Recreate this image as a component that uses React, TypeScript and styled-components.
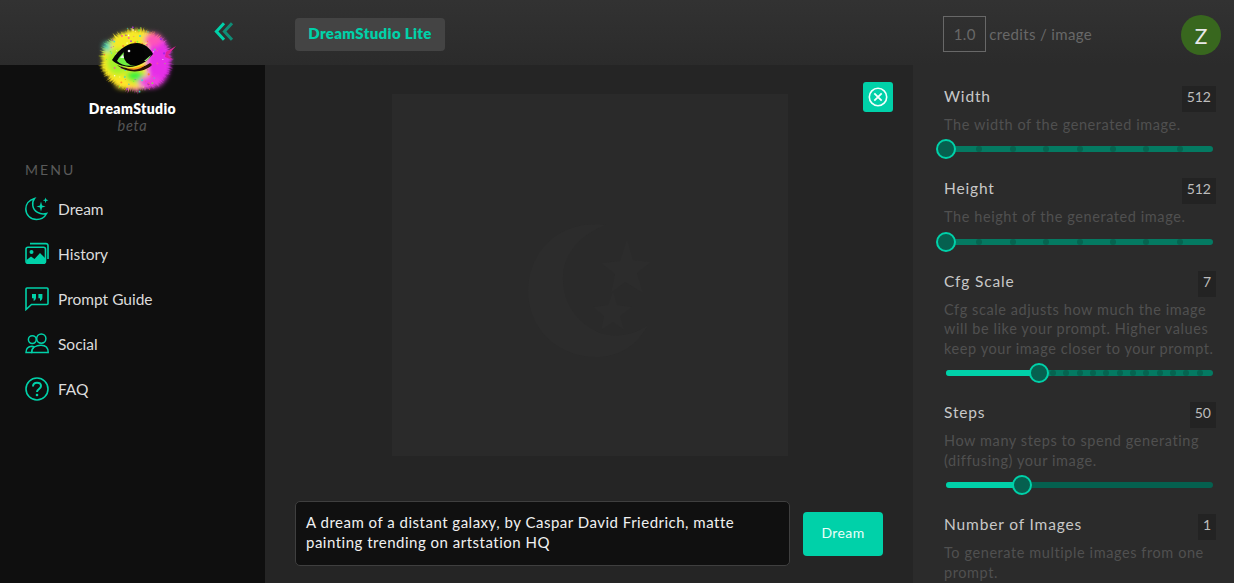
import React from "react";
import styled, { createGlobalStyle } from "styled-components";

const Global = createGlobalStyle`
  html, body { margin: 0; padding: 0; background: #252525; }
  body { font-family: "Lato", "Liberation Sans", sans-serif; overflow: hidden; }
  * { box-sizing: border-box; }
`;

const ACCENT = "#00d1a9";

const Page = styled.div`
  width: 1234px; height: 583px; display: flex; flex-direction: column; overflow: hidden; position: relative;
`;
const TopBar = styled.header`
  height: 65px; flex: none; display: flex; align-items: center;
  background: linear-gradient(#323232, #2b2b2b);
`;
const CollapseSlot = styled.div`
  width: 265px; flex: none; display: flex; justify-content: flex-end; padding-right: 31px; margin-top: -2px;
`;
const LiteBadge = styled.div`
  margin-left: 30px; width: 150px; height: 33px; margin-top: 4px; border-radius: 4px; background: #444;
  color: ${ACCENT}; font-weight: 800; font-size: 15px; letter-spacing: .33px;
  display: flex; align-items: center; justify-content: center; padding-bottom: 3px;
`;
const Credits = styled.div`
  margin-left: auto; display: flex; align-items: center; gap: 3px; color: #686868; font-size: 15px;
  letter-spacing: .35px; margin-top: 3px;
`;
const CreditBox = styled.div`
  width: 43px; height: 36px; border: 1px solid #686868; display: flex; align-items: center; justify-content: center;
`;
const Avatar = styled.div`
  width: 40px; height: 40px; border-radius: 50%; background: #38671e; color: #e8e8e8; font-size: 21px;
  display: flex; align-items: center; justify-content: center; margin: 5px 13px 0 89px;
`;
const Body = styled.div` flex: 1; min-height: 0; display: flex; `;
const Sidebar = styled.aside`
  width: 265px; flex: none; background: #0f0f0f; display: flex; flex-direction: column; padding-top: 35px;
`;
const Brand = styled.div`
  width: 265px; display: flex; flex-direction: column; align-items: center;
`;
const BrandName = styled.div` color: #fff; font-weight: 800; font-size: 14px; line-height: 17px; letter-spacing: .38px; `;
const BrandTag = styled.div` color: #565656; font-style: italic; font-size: 14.5px; line-height: 17px; letter-spacing: .7px; `;
const MenuTitle = styled.div`
  margin: 27px 0 0 25px; color: #5a5a5a; font-size: 14px; letter-spacing: 2.1px; line-height: 18px;
`;
const Nav = styled.nav` margin-top: 7px; display: flex; flex-direction: column; `;
const NavItem = styled.a`
  height: 45px; padding-left: 25px; display: flex; align-items: center; gap: 9px; color: #dcdcdc; font-size: 15.5px;
  letter-spacing: 0;
`;
const LogoSlot = styled.div` position: absolute; left: 90px; top: 20px; width: 90px; height: 78px; `;
const Main = styled.main`
  flex: 1; min-width: 0; background: #252525; display: flex; flex-direction: column; align-items: flex-start; position: relative;
  padding-top: 29px;
`;
const Canvas = styled.div`
  margin-left: 127px; width: 396px; height: 362px; background: #2a2a2a; display: flex; align-items: center; justify-content: center;
`;
const CloseButton = styled.button`
  position: absolute; left: 598px; top: 17px; width: 30px; height: 30px; border: 0; padding: 0; border-radius: 3px;
  background: ${ACCENT}; display: flex; align-items: center; justify-content: center;
`;
const PromptRow = styled.div` margin: 45px 0 0 30px; display: flex; align-items: center; gap: 13px; `;
const Prompt = styled.div`
  width: 495px; height: 65px; border: 1px solid #3f3f3f; border-radius: 5px; background: #101010; color: #f0f0f0;
  font-size: 15px; line-height: 20px; padding: 10px 10px; letter-spacing: .5px;
`;
const DreamButton = styled.button`
  width: 80px; height: 44px; border: 0; border-radius: 4px; background: ${ACCENT}; color: #eafff9; font-family: inherit;
  font-size: 14px; letter-spacing: .4px; padding: 0 0 3px;
`;
const Panel = styled.aside`
  width: 321px; flex: none; background: #2b2b2b; padding: 21px 18px 0 30px; display: flex; flex-direction: column;
`;
const Setting = styled.section` display: flex; flex-direction: column; margin-bottom: 19.2px; `;
const SettingHead = styled.div` display: flex; justify-content: space-between; align-items: flex-start; height: 26px; `;
const SettingLabel = styled.div` color: #c8c8c8; font-size: 15.5px; letter-spacing: .85px; line-height: 21px; padding-left: 1px; `;
const SettingValue = styled.div`
  height: 26px; min-width: 16px; padding: 0 5px 5px; background: #232323; color: #bdbdbd; font-size: 14px;
  display: flex; align-items: center; justify-content: center;
`;
const Hint = styled.p`
  margin: 3px 0 0 1px; color: #505050; font-size: 14.5px; line-height: 19.6px; letter-spacing: .58px; width: 275px;
`;
const SliderBox = styled.div`
  position: relative; height: 20px; width: 267px; margin: 4.6px 0 0 3px;
`;
const Track = styled.div<{ $bg: string }>`
  position: absolute; left: 0; right: 0; top: 7px; height: 6px; border-radius: 3px; background: ${p => p.$bg}; overflow: hidden;
`;
const Fill = styled.div`
  position: absolute; left: 0; top: 0; bottom: 0; background: ${ACCENT};
`;
const Tick = styled.i`
  position: absolute; top: 0; width: 6px; height: 6px; margin-left: -3px; border-radius: 50%; background: #066450;
`;
const Thumb = styled.div`
  position: absolute; top: 0; width: 20px; height: 20px; margin-left: -10px; border-radius: 50%;
  background: #06604f; border: 2px solid ${ACCENT};
`;

function Slider({ pct, ticks = 0, bg = "#047a62" }: { pct: number; ticks?: number; bg?: string }) {
  const marks = Array.from({ length: Math.max(ticks - 1, 0) }, (_, i) => ((i + 1) / ticks) * 100).filter(v => v > pct);
  return (
    <SliderBox>
      <Track $bg={bg}>
        <Fill style={{ width: `${pct}%` }} />
        {marks.map(m => <Tick key={m} style={{ left: `${m}%` }} />)}
      </Track>
      <Thumb style={{ left: `${pct}%` }} />
    </SliderBox>
  );
}

function seeded(n: number) {
  const x = Math.sin(n * 127.1 + 11.7) * 43758.5453;
  return x - Math.floor(x);
}
function spikeColor(deg: number) {
  const stops: [number, string][] = [
    [0, "#e22ff0"], [30, "#e52ff0"], [60, "#f03fd8"], [90, "#f93df0"], [108, "#ffd21f"], [150, "#ffe81f"], [185, "#d8f01f"],
    [205, "#6fe35f"], [225, "#ffe92b"], [265, "#ffdc2a"], [295, "#ffb52a"], [315, "#f96fd0"], [340, "#e040f0"],
  ];
  for (let i = stops.length - 1; i >= 0; i--) if (deg >= stops[i][0]) return stops[i][1];
  return stops[0][1];
}

function Logo() {
  const cx = 46, cy = 40;
  const at = (rr: number, aa: number) => `${(cx + 1.12 * rr * Math.cos(aa)).toFixed(1)},${(cy + rr * Math.sin(aa)).toFixed(1)}`;
  const spikes = Array.from({ length: 200 }, (_, i) => {
    const a = (i / 200) * Math.PI * 2;
    const deg = (a * 180) / Math.PI;
    const r = 30 + seeded(i) * 4.5;
    const w = 0.06 + seeded(i + 400) * 0.05;
    return <polygon key={i} points={`${at(18, a - w)} ${at(r, a)} ${at(18, a + w)}`} fill={spikeColor(deg)} />;
  });
  const specks = Array.from({ length: 90 }, (_, i) => {
    const a = seeded(i + 900) * Math.PI * 2;
    const r = 14 + seeded(i + 1300) * 19;
    const palette = ["#fffb6a", "#ff7a2a", "#3fd8d0", "#ffffff", "#a024e0", "#ff4fa0", "#7df03a"];
    return (
      <circle key={i} cx={cx + r * Math.cos(a)} cy={cy + r * Math.sin(a)} r={0.4 + seeded(i + 70) * 0.8}
        fill={palette[Math.floor(seeded(i + 2000) * palette.length)]} opacity={0.85} />
    );
  });
  return (
    <svg width="90" height="78" viewBox="0 0 90 78">
      <defs>
        <filter id="soft" x="-20%" y="-20%" width="140%" height="140%"><feGaussianBlur stdDeviation="2.4" /></filter>
        <filter id="tiny"><feGaussianBlur stdDeviation=".4" /></filter>
      </defs>
      <g filter="url(#tiny)">{spikes}</g>
      <g filter="url(#soft)">
        <ellipse cx="46" cy="40" rx="33" ry="29" fill="#f5ea25" />
        <ellipse cx="68" cy="41" rx="12" ry="24" fill="#e62ee8" />
        <ellipse cx="63" cy="20" rx="9" ry="7" fill="#ff55b8" />
        <ellipse cx="28" cy="42" rx="11" ry="13" fill="#a5f22b" />
        <ellipse cx="17" cy="27" rx="4" ry="5" fill="#55d8c0" />
        <ellipse cx="45" cy="56" rx="9" ry="6" fill="#3ff03a" />
        <ellipse cx="60" cy="62" rx="12" ry="6" fill="#ef3fe0" />
        <ellipse cx="34" cy="64" rx="9" ry="5" fill="#ffe52a" />
      </g>
      <g filter="url(#tiny)">{specks}</g>
      <path d="M76 32 L86 26 L78 35 L83 40 L75 37Z" fill="#e0249a" />
      <path d="M22 40 C30 27 39 23 47 23 C54 23 60 28 63 34 C57 42 48 47 39 47 C32 46 26 44 22 40Z" fill="#050505" />
      <path d="M27 41 C31 34 35 31 38 30 L39 40 L46 45 C38 47 31 45 27 41Z" fill="#6ff03f" />
      <path d="M30 38 C32 35 35 33 38 32 L38 38Z" fill="#eaffe0" />
      <path d="M56 41 C59 39 60 37 61 35 L54 41Z" fill="#9af07a" />
      <path d="M27 45 C36 50 50 50 60 43 L62 45 C54 53 37 54 27 45Z" fill="#2a1205" />
      <path d="M36 48 C43 49 50 47 56 44 C51 50 43 51 36 48Z" fill="#ff9a1f" />
      <circle cx="44" cy="35" r="10.5" fill="#030303" />
      <circle cx="39" cy="31" r="1.3" fill="#e8e8e8" />
    </svg>
  );
}

const Chevrons = () => (
  <svg width="20" height="19" viewBox="0 0 20 19" fill="none" strokeWidth="3">
    <path d="M10 1.2 L2.4 9.5 L10 17.8" stroke={ACCENT} />
    <path d="M18 1.2 L10.4 9.5 L18 17.8" stroke="#0f8d76" />
  </svg>
);
const MoonIcon = () => (
  <svg width="24" height="24" viewBox="0 0 24 24" fill="none" stroke={ACCENT} strokeWidth="1.5">
    <path d="M9.5 1.5 C3.8 3 .8 7.4.8 12 C.8 18 5.6 22.6 11.5 22.6 C16 22.6 19.6 20.3 21.6 16.5 C15 18.3 8.7 14.6 7.8 8.6 C7.4 6 8 3.4 9.5 1.5Z" />
    <path d="M16 4.6 L17.1 8.4 L20.6 9.5 L17.1 10.6 L16 14.4 L14.9 10.6 L11.4 9.5 L14.9 8.4Z" fill={ACCENT} stroke="none" />
    <path d="M20.6.4 L21.3 2.6 L23.4 3.3 L21.3 4 L20.6 6.2 L19.9 4 L17.8 3.3 L19.9 2.6Z" fill={ACCENT} stroke="none" />
  </svg>
);
const HistoryIcon = () => (
  <svg width="24" height="24" viewBox="0 0 24 24" fill="none" stroke={ACCENT} strokeWidth="1.6">
    <rect x="1" y="5.2" width="19.5" height="16" rx="2" />
    <path d="M5 1.6 H21 a2 2 0 0 1 2 2 V17" />
    <circle cx="6.5" cy="10" r="2" fill={ACCENT} stroke="none" />
    <path d="M1.5 18 L6 14.6 L9.5 17 L15 11 L20 16 V20 a1 1 0 0 1-1 1 H2.5 a1 1 0 0 1-1-1Z" fill={ACCENT} stroke="none" />
  </svg>
);
const PromptIcon = () => (
  <svg width="24" height="24" viewBox="0 0 24 24" fill="none" stroke={ACCENT} strokeWidth="1.6">
    <path d="M1 2 a1 1 0 0 1 1-1 H22 a1 1 0 0 1 1 1 V16.5 a1 1 0 0 1-1 1 H6.5 L1 22.5Z" />
    <path d="M7 7 H11 V10.5 C11 12.5 10 13.6 8.6 14 V11.2 H7Z M13.4 7 H17.4 V10.5 C17.4 12.5 16.4 13.6 15 14 V11.2 H13.4Z" fill={ACCENT} stroke="none" />
  </svg>
);
const SocialIcon = () => (
  <svg width="24" height="24" viewBox="0 0 24 24" fill="none" stroke={ACCENT} strokeWidth="1.5">
    <circle cx="7.3" cy="7.6" r="3.9" />
    <circle cx="16.3" cy="6.6" r="4.6" />
    <path d="M1 20.4 C1 17 3 14.5 7 14.3 C8 14.3 8.5 14.5 9 14.8 C7.5 16.3 6.7 18.2 6.6 20.4Z" />
    <path d="M6.6 20.4 C6.8 15.6 11 13.2 16 13.2 C20.5 13.2 23.2 16 23.2 20.4Z" />
  </svg>
);
const HelpIcon = () => (
  <svg width="24" height="24" viewBox="0 0 24 24" fill="none" stroke={ACCENT} strokeWidth="1.6">
    <circle cx="12" cy="12" r="11" />
    <path d="M8 9.4 C8 7 9.8 5.7 12 5.7 C14.3 5.7 16 7.1 16 9.1 C16 12 12 12 12 15" strokeWidth="2" />
    <circle cx="12" cy="18" r="1.3" fill={ACCENT} stroke="none" />
  </svg>
);
const CloseIcon = () => (
  <svg width="20" height="20" viewBox="0 0 20 20" fill="none" stroke="#f2fffc" strokeWidth="1.6">
    <circle cx="10" cy="10" r="8.7" />
    <path d="M6.3 6.3 L13.7 13.7 M13.7 6.3 L6.3 13.7" strokeWidth="1.8" />
  </svg>
);
const Watermark = () => (
  <svg width="132" height="136" viewBox="0 0 132 136" fill="#2c2c2c" style={{ transform: "translate(4px, 16px)" }}>
    <path d="M78 2 C32 -4 0 28 0 68 C0 106 30 134 68 134 C90 134 108 124 120 102 C100 116 76 116 58 102 C38 88 30 60 38 38 C44 22 60 8 78 2Z" />
    <path d="M99 16 L105 37 L123 39 L109 50 L115 70 L97 59 L83 70 L87 51 L73 40 L92 38Z" />
    <path d="M85 68 L89 82 L104 84 L92 93 L96 107 L85 99 L73 107 L76 93 L65 84 L80 82Z" />
  </svg>
);

const items = [
  { label: "Dream", icon: <MoonIcon /> },
  { label: "History", icon: <HistoryIcon /> },
  { label: "Prompt Guide", icon: <PromptIcon /> },
  { label: "Social", icon: <SocialIcon /> },
  { label: "FAQ", icon: <HelpIcon /> },
];

export default function App() {
  return (
    <Page>
      <Global />
      <TopBar>
        <CollapseSlot><Chevrons /></CollapseSlot>
        <LiteBadge>DreamStudio Lite</LiteBadge>
        <Credits>
          <CreditBox>1.0</CreditBox>
          credits / image
        </Credits>
        <Avatar>Z</Avatar>
      </TopBar>
      <LogoSlot><Logo /></LogoSlot>
      <Body>
        <Sidebar>
          <Brand>
            <BrandName>DreamStudio</BrandName>
            <BrandTag>beta</BrandTag>
          </Brand>
          <MenuTitle>MENU</MenuTitle>
          <Nav>
            {items.map(i => <NavItem key={i.label}>{i.icon}{i.label}</NavItem>)}
          </Nav>
        </Sidebar>
        <Main>
          <Canvas><Watermark /></Canvas>
          <CloseButton aria-label="Close"><CloseIcon /></CloseButton>
          <PromptRow>
            <Prompt>A dream of a distant galaxy, by Caspar David Friedrich, matte painting trending on artstation HQ</Prompt>
            <DreamButton>Dream</DreamButton>
          </PromptRow>
        </Main>
        <Panel>
          <Setting>
            <SettingHead><SettingLabel>Width</SettingLabel><SettingValue>512</SettingValue></SettingHead>
            <Hint>The width of the generated image.</Hint>
            <Slider pct={0} ticks={8} />
          </Setting>
          <Setting>
            <SettingHead><SettingLabel>Height</SettingLabel><SettingValue>512</SettingValue></SettingHead>
            <Hint>The height of the generated image.</Hint>
            <Slider pct={0} ticks={8} />
          </Setting>
          <Setting>
            <SettingHead><SettingLabel>Cfg Scale</SettingLabel><SettingValue>7</SettingValue></SettingHead>
            <Hint>Cfg scale adjusts how much the image will be like your prompt. Higher values keep your image closer to your prompt.</Hint>
            <Slider pct={35} ticks={20} />
          </Setting>
          <Setting>
            <SettingHead><SettingLabel>Steps</SettingLabel><SettingValue>50</SettingValue></SettingHead>
            <Hint>How many steps to spend generating (diffusing) your image.</Hint>
            <Slider pct={28.3} bg="#05604f" />
          </Setting>
          <Setting>
            <SettingHead><SettingLabel>Number of Images</SettingLabel><SettingValue>1</SettingValue></SettingHead>
            <Hint>To generate multiple images from one prompt.</Hint>
          </Setting>
        </Panel>
      </Body>
    </Page>
  );
}
